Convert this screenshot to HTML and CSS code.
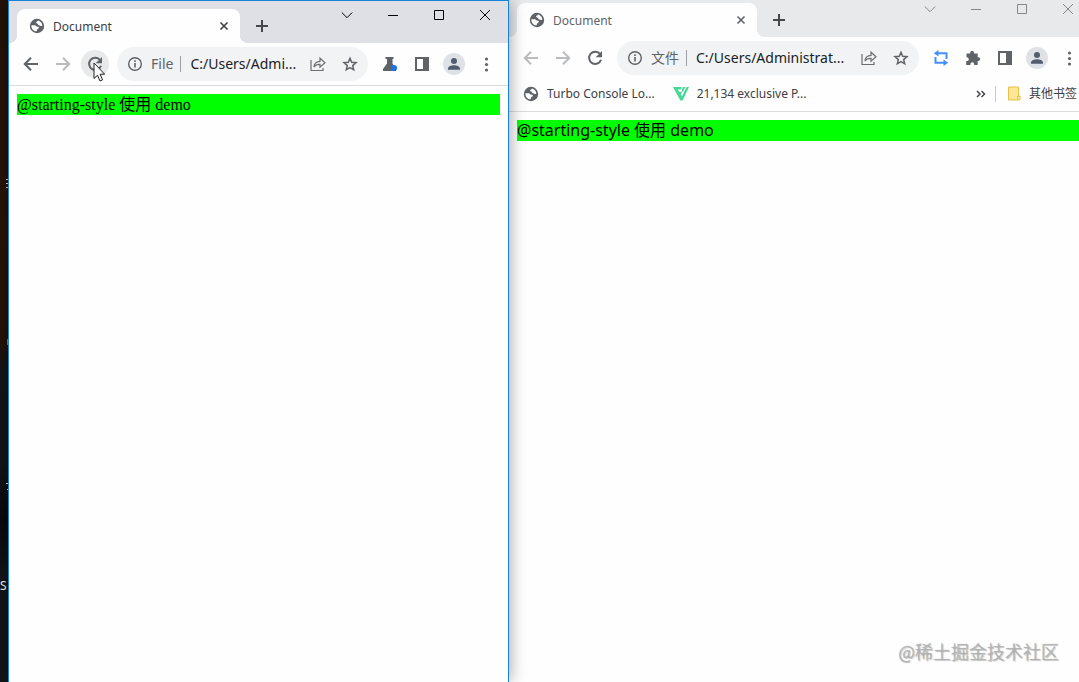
FILE: index.html
```html
<!DOCTYPE html>
<html lang="zh-CN">
<head>
    <meta charset="UTF-8">
    <meta name="viewport" content="width=device-width, initial-scale=1.0">
    <title>Document</title>
    <link rel="stylesheet" href="styles.css">
</head>
<body>
    <!-- Shared icons -->
    <svg class="sprite" aria-hidden="true">
        <symbol id="globe" viewBox="0 0 16 16">
            <circle cx="8" cy="8" r="7.2" fill="#5f6368"/>
            <path d="M2.4 7.2h3.2c1.5 0 1.6 1.6 3 1.6 1 0 1.5.5 1.2 1.3-.3.7-1.4.6-1.6 1.3-.2.6-.2 1.3-.9 1.9-3-.1-5.2-2.8-4.9-6.1zM9 2.5c-.3 1.2-1.9 1-1.9 2.1 0 .9 1 .7 1.7 1.4.7.6.6 1.4 1.6 1.4.9 0 1.1.8 2.9.6C13.4 5.2 11.6 3 9 2.5z" fill="#fff"/>
        </symbol>
        <symbol id="close" viewBox="0 0 16 16">
            <path d="M4.5 4.5l7 7M11.5 4.5l-7 7" stroke="currentColor" stroke-width="1.6"/>
        </symbol>
        <symbol id="plus" viewBox="0 0 16 16">
            <path d="M8 2v12M2 8h12" stroke="#45484c" stroke-width="2"/>
        </symbol>
        <symbol id="back" viewBox="0 0 20 20">
            <path d="M17 10H4.5M10 3.8L3.8 10l6.2 6.2" fill="none" stroke="currentColor" stroke-width="2"/>
        </symbol>
        <symbol id="forward" viewBox="0 0 20 20">
            <path d="M3 10h12.5M10 3.8l6.2 6.2-6.2 6.2" fill="none" stroke="currentColor" stroke-width="2"/>
        </symbol>
        <symbol id="reload" viewBox="0 0 20 20">
            <path d="M15.2 6.3A6.1 6.1 0 1 0 16 11.7" fill="none" stroke="#5f6368" stroke-width="2"/>
            <path d="M17 3v6.3h-6.3z" fill="#5f6368"/>
        </symbol>
        <symbol id="info" viewBox="0 0 16 16">
            <circle cx="8" cy="8" r="6.3" fill="none" stroke="#5f6368" stroke-width="1.4"/>
            <path d="M8 7v4.5M8 4.3v1.6" stroke="#5f6368" stroke-width="1.6"/>
        </symbol>
        <symbol id="share" viewBox="0 0 16 16">
            <path d="M1 4v10.5h12V12M4 11c.3-3.8 2.500-5.600 6-5.700V2.200L15 6.700l-5 4.500V8.300C7.200 8.200 5.300 9 4 11z" fill="none" stroke="#6b6f73" stroke-width="1.2"/>
        </symbol>
        <symbol id="star" viewBox="0 0 16 16">
            <path d="M8 2.3l1.7 4 4.300.4-3.300 2.900 1 4.200L8 11.600l-3.700 2.200 1-4.200L2 6.700l4.300-.4z" fill="none" stroke="#5f6368" stroke-width="1.5"/>
        </symbol>
        <symbol id="panel" viewBox="0 0 16 16">
            <path d="M1 1h14v14H1zM3 3v10h6V3z" fill="#5f6368" fill-rule="evenodd"/>
        </symbol>
        <symbol id="person" viewBox="0 0 22 22">
            <circle cx="11" cy="11" r="11" fill="#dee1e6"/>
            <circle cx="11" cy="8" r="3" fill="#525d70"/>
            <path d="M5 16.8v-1.3c0-2.1 3.5-3.3 6-3.3s6 1.2 6 3.3v1.3z" fill="#525d70"/>
        </symbol>
        <symbol id="dots" viewBox="0 0 16 16">
            <g fill="#5f6368"><circle cx="8.5" cy="3" r="1.6"/><circle cx="8.5" cy="8.5" r="1.6"/><circle cx="8.5" cy="14" r="1.6"/></g>
        </symbol>
        <symbol id="win-down" viewBox="0 0 12 12"><path d="M.8 3.5L6 8.7l5.2-5.2" fill="none" stroke="currentColor"/></symbol>
        <symbol id="win-min" viewBox="0 0 12 12"><path d="M1 6.5h10" stroke="currentColor"/></symbol>
        <symbol id="win-max" viewBox="0 0 12 12"><path d="M1.5 1.5h9v9h-9z" fill="none" stroke="currentColor"/></symbol>
        <symbol id="win-close" viewBox="0 0 12 12"><path d="M1 1l10 10M11 1L1 11" stroke="currentColor"/></symbol>
    </svg>

    <div class="screen">
        <!-- Desktop behind the windows -->
        <div class="desktop">
            <svg class="desktop-mark mark-top" viewBox="0 0 2 10"><path d="M0 .5h2M0 4.5h2M0 8.5h2" stroke="#ddd"/></svg>
            <svg class="desktop-mark mark-dot" viewBox="0 0 2 10"><path d="M1 2h1v6H1z" fill="#4caf50"/></svg>
            <svg class="desktop-mark mark-mid" viewBox="0 0 2 10"><path d="M0 1.5h2M1 7.5h1" stroke="#ddd"/></svg>
            <span class="desktop-label">S</span>
        </div>

        <section class="window window-active">
            <header class="tab-strip">
                <div class="tab">
                    <svg class="icon-16"><use href="#globe"/></svg>
                    <span class="tab-title">Document</span>
                    <button class="tab-close" aria-label="Close tab"><svg class="icon-16"><use href="#close"/></svg></button>
                </div>
                <button class="new-tab" aria-label="New tab"><svg class="icon-16"><use href="#plus"/></svg></button>
                <div class="window-controls">
                    <button aria-label="Search tabs"><svg class="icon-12"><use href="#win-down"/></svg></button>
                    <button aria-label="Minimize"><svg class="icon-12"><use href="#win-min"/></svg></button>
                    <button aria-label="Maximize"><svg class="icon-12"><use href="#win-max"/></svg></button>
                    <button aria-label="Close"><svg class="icon-12"><use href="#win-close"/></svg></button>
                </div>
            </header>
            <nav class="toolbar">
                <button class="tool" aria-label="Back"><svg class="icon-20"><use href="#back"/></svg></button>
                <button class="tool disabled" aria-label="Forward"><svg class="icon-20"><use href="#forward"/></svg></button>
                <button class="tool hovered" aria-label="Reload">
                    <svg class="icon-20"><use href="#reload"/></svg>
                    <svg class="cursor" viewBox="0 0 12 20"><path d="M1 1v15.5l3.5-3.3 2.5 5.8 2.6-1.1-2.5-5.7h4.6z" fill="#fff" stroke="#222"/></svg>
                </button>
                <div class="omnibox">
                    <svg class="icon-16"><use href="#info"/></svg>
                    <label class="scheme" for="url-left">File</label>
                    <input class="url" id="url-left" type="text" value="C:/Users/Admi...">
                    <button class="omni-button" aria-label="Share"><svg class="icon-16"><use href="#share"/></svg></button>
                    <button class="omni-button" aria-label="Bookmark"><svg class="icon-16"><use href="#star"/></svg></button>
                </div>
                <button class="tool" aria-label="Experiments">
                    <svg class="icon-16" viewBox="0 0 16 16"><path d="M3.5 1h8v2h-1v4.5L14 13v2H1v-2l4-5.5V3H3.5z" fill="#5f6368"/><circle cx="12" cy="12" r="3" fill="#1a73e8"/></svg>
                </button>
                <button class="tool" aria-label="Side panel"><svg class="icon-16"><use href="#panel"/></svg></button>
                <button class="tool" aria-label="Profile"><svg class="icon-22"><use href="#person"/></svg></button>
                <button class="tool" aria-label="Menu"><svg class="icon-16"><use href="#dots"/></svg></button>
            </nav>
            <main class="page page-serif">
                <div class="demo">@starting-style 使用 demo</div>
            </main>
        </section>

        <section class="window window-inactive">
            <header class="tab-strip">
                <div class="tab">
                    <svg class="icon-16"><use href="#globe"/></svg>
                    <span class="tab-title">Document</span>
                    <button class="tab-close" aria-label="关闭标签页"><svg class="icon-16"><use href="#close"/></svg></button>
                </div>
                <button class="new-tab" aria-label="新标签页"><svg class="icon-16"><use href="#plus"/></svg></button>
                <div class="window-controls">
                    <button aria-label="搜索标签页"><svg class="icon-12"><use href="#win-down"/></svg></button>
                    <button aria-label="最小化"><svg class="icon-12"><use href="#win-min"/></svg></button>
                    <button aria-label="最大化"><svg class="icon-12"><use href="#win-max"/></svg></button>
                    <button aria-label="关闭"><svg class="icon-12"><use href="#win-close"/></svg></button>
                </div>
            </header>
            <nav class="toolbar">
                <button class="tool disabled" aria-label="后退"><svg class="icon-20"><use href="#back"/></svg></button>
                <button class="tool disabled" aria-label="前进"><svg class="icon-20"><use href="#forward"/></svg></button>
                <button class="tool" aria-label="重新加载"><svg class="icon-20"><use href="#reload"/></svg></button>
                <div class="omnibox">
                    <svg class="icon-16"><use href="#info"/></svg>
                    <label class="scheme" for="url-right">文件</label>
                    <input class="url" id="url-right" type="text" value="C:/Users/Administrat...">
                    <button class="omni-button" aria-label="分享"><svg class="icon-16"><use href="#share"/></svg></button>
                    <button class="omni-button" aria-label="收藏"><svg class="icon-16"><use href="#star"/></svg></button>
                </div>
                <button class="tool" aria-label="循环">
                    <svg class="icon-16" viewBox="0 0 16 16"><path d="M5 3.2h8.5V9M11 12.8H2.5V7" fill="none" stroke="#4790fa" stroke-width="2"/><path d="M5.5 0v6.4L.8 3.2zM10.5 9.6V16l4.7-3.2z" fill="#4790fa"/></svg>
                </button>
                <button class="tool" aria-label="扩展程序">
                    <svg class="icon-16" viewBox="0 0 16 16"><path d="M1.5 3.5h3.7v-.8a1.9 1.9 0 0 1 3.8 0v.8h3.7v3.8h.7a1.8 1.8 0 0 1 0 3.6h-.7V15H9.2v-.8a1.9 1.9 0 0 0-3.8 0v.8H1.2v-3.9h.7a1.9 1.9 0 0 0 0-3.8h-.4z" fill="#5f6368"/></svg>
                </button>
                <button class="tool" aria-label="侧边栏"><svg class="icon-16"><use href="#panel"/></svg></button>
                <button class="tool" aria-label="个人资料"><svg class="icon-22"><use href="#person"/></svg></button>
                <button class="tool" aria-label="菜单"><svg class="icon-16"><use href="#dots"/></svg></button>
            </nav>
            <nav class="bookmarks">
                <a class="bookmark" href="#"><svg class="icon-16"><use href="#globe"/></svg>Turbo Console Lo...</a>
                <a class="bookmark" href="#">
                    <svg class="icon-16" viewBox="0 0 16 16"><path d="M0 1h9L7.6 3.4H4.6l1.5 2.4h3L7.9 8.2l1 2.2L13.600 1H16L9.600 14.500H7.400z" fill="#49d795"/><path d="M10 1h2.4L9.6 6.2 8.6 4z" fill="#49d795"/></svg>
                    21,134 exclusive P...
                </a>
                <button class="more-bookmarks" aria-label="更多书签">
                    <svg class="icon-12" viewBox="0 0 12 12"><path d="M2 3l3 3-3 3M6.5 3l3 3-3 3" fill="none" stroke="#45484c" stroke-width="1.5"/></svg>
                </button>
                <a class="bookmark other-bookmarks" href="#">
                    <svg class="icon-folder" viewBox="0 0 13 15"><path d="M.5 1h10v9h1.5v4H.5z" fill="#ffe694" stroke="#e8c14b"/><path d="M9.5 14v-3.5H12" fill="none" stroke="#e8c14b"/></svg>
                    其他书签
                </a>
            </nav>
            <main class="page">
                <div class="demo">@starting-style 使用 demo</div>
            </main>
        </section>
    </div>

    <div class="watermark">@稀土掘金技术社区</div>
</body>
</html>
```
FILE: styles.css
```css
* {
    box-sizing: border-box;
}

body {
    margin: 0;
    overflow: hidden;
    font-family: "Noto Sans", "Noto Sans CJK SC", sans-serif;
    font-size: 12px;
    color: #3c4043;
    background-color: #fefefe;
}

button {
    display: flex;
    align-items: center;
    justify-content: center;
    padding: 0;
    border: none;
    background: none;
    color: inherit;
}

.sprite {
    display: none;
}

.icon-12 {
    width: 12px;
    height: 12px;
}

.icon-16 {
    width: 16px;
    height: 16px;
    flex-shrink: 0;
}

.icon-20 {
    width: 20px;
    height: 20px;
}

.icon-22 {
    width: 22px;
    height: 22px;
}

.icon-folder {
    width: 13px;
    height: 15px;
}

.screen {
    display: grid;
    grid-template-columns: 8px 501fr 570fr;
    min-height: 100vh;
}

/* Desktop */
.desktop {
    position: relative;
    overflow: hidden;
    color: #fff;
    background: linear-gradient(#251208, #2a1405 35%, #251305 50%, #14161a 54%, #12151a 68%, #080a0e 76%, #14151a 84%, #14151a);
}

.desktop-label {
    position: absolute;
    top: 578px;
    left: 0;
    line-height: 16px;
}

.desktop-mark {
    position: absolute;
    right: 0;
    width: 2px;
    height: 10px;
}

.mark-top {
    top: 179px;
}

.mark-dot {
    top: 337px;
}

.mark-mid {
    top: 482px;
}

/* Browser windows */
.window {
    display: flex;
    flex-direction: column;
    min-width: 0;
    background-color: #fefefe;
}

.window-active {
    position: relative;
    z-index: 1;
    border: 1px solid #1883d7;
    border-bottom: none;
    box-shadow: 0 0 16px rgba(0, 0, 0, 0.4);
}

/* runs past the right edge of the screen */
.window-inactive {
    margin-right: -12px;
}

.tab-strip {
    display: flex;
    padding: 8px 0 0 8px;
    background-color: #dee0e6;
}

.window-inactive .tab-strip {
    padding-top: 3px;
    background-color: #e8e9eb;
}

.tab {
    position: relative;
    display: flex;
    align-items: center;
    gap: 8px;
    flex: 0 1 223px;
    height: 34px;
    padding: 0 8px 0 12px;
    border-radius: 8px 8px 0 0;
    background-color: #fefefe;
}

.window-inactive .tab {
    flex-basis: 240px;
    color: #5f6368;
}

.tab::before,
.tab::after {
    content: "";
    position: absolute;
    bottom: 0;
    width: 8px;
    height: 8px;
}

.tab::before {
    right: 100%;
    background: radial-gradient(circle at 0 0, transparent 8px, #fefefe 8px);
}

.tab::after {
    left: 100%;
    background: radial-gradient(circle at 100% 0, transparent 8px, #fefefe 8px);
}

.tab-title {
    flex: 1;
}

.new-tab {
    width: 28px;
    height: 34px;
    margin-left: 8px;
}

.window-controls {
    display: flex;
    height: 28px;
    margin: -8px 0 0 auto;
    color: #000;
}

.window-controls button {
    width: 46px;
}

.window-inactive .window-controls {
    height: 18px;
    margin-top: -3px;
    color: #85878a;
}

.toolbar {
    display: flex;
    align-items: center;
    gap: 4px;
    height: 42px;
    padding: 0 8px;
}

.window-active .toolbar,
.bookmarks {
    border-bottom: 1px solid #dadce0;
}

.window-active .toolbar {
    height: 43px;
}

.tool {
    flex: 0 0 28px;
    height: 28px;
    border-radius: 14px;
    color: #5f6368;
}

.disabled {
    color: #babcbe;
}

.hovered {
    position: relative;
    background-color: #e8e9eb;
}

.cursor {
    position: absolute;
    top: 12px;
    left: 12px;
    width: 12px;
    height: 20px;
}

.omnibox {
    display: flex;
    align-items: center;
    flex: 1;
    min-width: 0;
    height: 34px;
    margin: 0 4px;
    padding: 0 10px;
    border-radius: 17px;
    background-color: #f1f3f4;
    font-size: 14px;
}

.scheme {
    margin-left: 8px;
    padding-right: 7px;
    border-right: 1px solid #9aa0a6;
    line-height: 16px;
    color: #5f6368;
}

.url {
    flex: 1;
    min-width: 0;
    padding: 0 0 0 9px;
    border: none;
    background: none;
    font: inherit;
    line-height: 16px;
    color: #202124;
}

.omni-button {
    margin-left: 16px;
}

.omni-button:first-of-type {
    margin-left: 4px;
}

/* Bookmarks bar */
.bookmarks {
    display: flex;
    align-items: center;
    height: 33px;
    padding: 0 14px 3px;
}

.window-inactive .bookmarks {
    padding-left: 14px;
}

.bookmark {
    display: flex;
    align-items: center;
    gap: 8px;
    margin-right: 18px;
    line-height: 16px;
    color: inherit;
    text-decoration: none;
    white-space: nowrap;
}

.more-bookmarks {
    margin: 0 8px 0 auto;
}

.other-bookmarks {
    margin-right: 0;
    padding-left: 12px;
    border-left: 1px solid #c8cacc;
}

/* Page content */
.page {
    padding: 8px;
    font-size: 16px;
    color: #000;
}

.page-serif {
    font-family: "Liberation Serif", "Noto Sans CJK SC", serif;
}

.demo {
    line-height: 21px;
    background-color: #00ff00;
}

.watermark {
    position: absolute;
    right: 20px;
    bottom: 16px;
    z-index: 2;
    font-family: "Noto Sans CJK SC", sans-serif;
    font-size: 18px;
    font-weight: 300;
    line-height: 30px;
    color: #b4b4b4;
    text-shadow: 0 0 1px #999, 1px 1px 1px #bbb;
}
```
